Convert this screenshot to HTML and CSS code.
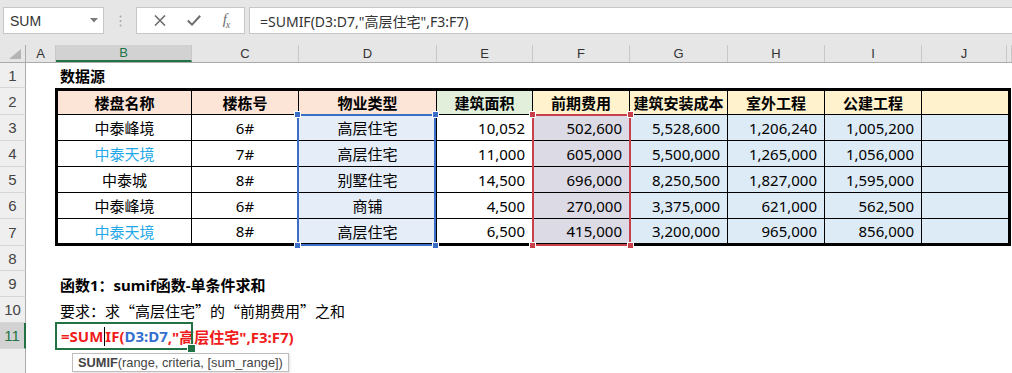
FILE: index.html
```html
<!DOCTYPE html>
<html lang="zh-CN">
<head>
    <meta charset="UTF-8">
    <title>SUMIF</title>
<link rel="stylesheet" href="styles.css">
</head>
<body>
    <!-- formula bar -->
    <div class="toolbar">
        <div class="namebox">
            <span>SUM</span>
            <svg width="8" height="5" viewBox="0 0 8 5"><polygon points="0,0 8,0 4,4.5" fill="#7a7a7a"/></svg>
        </div>
        <div class="grip">
            <svg width="3" height="12" viewBox="0 0 3 12"><circle cx="1.5" cy="1.5" r="1" fill="#a6a6a6"/><circle cx="1.5" cy="6" r="1" fill="#a6a6a6"/><circle cx="1.5" cy="10.5" r="1" fill="#a6a6a6"/></svg>
        </div>
        <div class="fxbtns">
            <svg width="12" height="11" viewBox="0 0 12 11"><path d="M1 0.5 L11 10.5 M11 0.5 L1 10.5" stroke="#6e6e6e" stroke-width="1.6"/></svg>
            <svg width="14" height="11" viewBox="0 0 14 11"><path d="M0.8 5.5 L5 9.6 L13.2 0.8" stroke="#6e6e6e" stroke-width="2" fill="none"/></svg>
            <span class="fx">f<sub>x</sub></span>
        </div>
        <div class="formula">=SUMIF(D3:D7,"高层住宅",F3:F7)</div>
    </div>

    <div class="sheet">
        <div class="colhead">
            <div class="corner"><svg width="12" height="10" viewBox="0 0 12 10"><polygon points="12,0 12,10 0,10" fill="#b4b4b4"/></svg></div>
            <div>A</div>
            <div class="sel">B</div>
            <div>C</div>
            <div>D</div>
            <div>E</div>
            <div>F</div>
            <div>G</div>
            <div>H</div>
            <div>I</div>
            <div>J</div>
            <div></div>
        </div>

        <div class="r r1">
            <div class="rh">1</div><div></div>
            <div class="c txt bold wide">数据源</div>
        </div>

        <div class="r r2">
            <div class="rh">2</div><div></div>
            <div class="t b pe hd">楼盘名称</div>
            <div class="t pe hd">楼栋号</div>
            <div class="t pe hd">物业类型</div>
            <div class="t gr hd">建筑面积</div>
            <div class="t ye hd">前期费用</div>
            <div class="t ye hd">建筑安装成本</div>
            <div class="t ye hd">室外工程</div>
            <div class="t ye hd">公建工程</div>
            <div class="t j ye hd"></div>
        </div>

        <div class="r">
            <div class="rh">3</div><div></div>
            <div class="t b">中泰峰境</div>
            <div class="t">6#</div>
            <div class="t dd">高层住宅
                <div class="range blue"><i class="h tl"></i><i class="h tr"></i><i class="h bl"></i><i class="h br"></i></div>
            </div>
            <div class="t n">10,052</div>
            <div class="t n ff">502,600
                <div class="range red"><i class="h tl"></i><i class="h tr"></i><i class="h bl"></i><i class="h br"></i></div>
            </div>
            <div class="t n bl">5,528,600</div>
            <div class="t n bl">1,206,240</div>
            <div class="t n bl">1,005,200</div>
            <div class="t j bl"></div>
        </div>

        <div class="r">
            <div class="rh">4</div><div></div>
            <div class="t b sky">中泰天境</div>
            <div class="t">7#</div>
            <div class="t dd">高层住宅</div>
            <div class="t n">11,000</div>
            <div class="t n ff">605,000</div>
            <div class="t n bl">5,500,000</div>
            <div class="t n bl">1,265,000</div>
            <div class="t n bl">1,056,000</div>
            <div class="t j bl"></div>
        </div>

        <div class="r">
            <div class="rh">5</div><div></div>
            <div class="t b">中泰城</div>
            <div class="t">8#</div>
            <div class="t dd">别墅住宅</div>
            <div class="t n">14,500</div>
            <div class="t n ff">696,000</div>
            <div class="t n bl">8,250,500</div>
            <div class="t n bl">1,827,000</div>
            <div class="t n bl">1,595,000</div>
            <div class="t j bl"></div>
        </div>

        <div class="r">
            <div class="rh">6</div><div></div>
            <div class="t b">中泰峰境</div>
            <div class="t">6#</div>
            <div class="t dd">商铺</div>
            <div class="t n">4,500</div>
            <div class="t n ff">270,000</div>
            <div class="t n bl">3,375,000</div>
            <div class="t n bl">621,000</div>
            <div class="t n bl">562,500</div>
            <div class="t j bl"></div>
        </div>

        <div class="r r7">
            <div class="rh">7</div><div></div>
            <div class="t b sky">中泰天境</div>
            <div class="t">8#</div>
            <div class="t dd">高层住宅</div>
            <div class="t n">6,500</div>
            <div class="t n ff">415,000</div>
            <div class="t n bl">3,200,000</div>
            <div class="t n bl">965,000</div>
            <div class="t n bl">856,000</div>
            <div class="t j bl"></div>
        </div>

        <div class="r r8">
            <div class="rh">8</div>
        </div>

        <div class="r">
            <div class="rh">9</div><div></div>
            <div class="c txt bold wide">函数1：sumif函数-单条件求和</div>
        </div>

        <div class="r">
            <div class="rh">10</div><div></div>
            <div class="c txt cjk wide">要求：求“高层住宅”的“前期费用”之和</div>
        </div>

        <div class="r">
            <div class="rh active">11</div><div></div>
            <div class="c txt editing"><span class="red-t">=SUM<span class="caret"></span>IF(</span><span class="blue-t">D3:D7</span><span class="red-t">,"高层住宅",F3:F7)</span>
                <div class="tip"><b>SUMIF</b>(range, criteria, [sum_range])</div>
            </div>
        </div>

        <div class="r">
            <div class="rh"></div>
        </div>
    </div>
</body>
</html>
```

FILE: styles.css
```css
*{
    margin: 0;
    padding: 0;
    box-sizing: border-box;
}
body{
    background-color: #fff;
    font-family: "Noto Sans", "Noto Sans CJK SC", sans-serif;
    width: 1012px;
    height: 373px;
    overflow: hidden;
}

/* formula bar */
.toolbar{
    height: 45px;
    background-color: #e6e6e6;
    display: flex;
    align-items: flex-start;
    padding-top: 7px;
}
.namebox{
    margin-left: 3px;
    width: 101px;
    height: 27px;
    background-color: #fff;
    border: 1px solid #c6c6c6;
    display: flex;
    align-items: center;
    justify-content: space-between;
    padding: 0 5px 0 6px;
    font: 14px "Liberation Sans", sans-serif;
    color: #333;
}
.grip{
    width: 32px;
    height: 27px;
    display: flex;
    align-items: center;
    justify-content: center;
}
.fxbtns{
    width: 109px;
    height: 27px;
    background-color: #fff;
    border: 1px solid #c6c6c6;
    display: flex;
    align-items: center;
    justify-content: space-around;
    padding: 0 4px 0 6px;
}
.fx{
    font: italic 15px "Liberation Serif", serif;
    color: #6e6e6e;
    letter-spacing: -1px;
}
.fx sub{
    font-size: 10px;
}
.formula{
    flex: 1;
    margin-left: 4px;
    height: 27px;
    background-color: #fff;
    border: 1px solid #c6c6c6;
    border-right: none;
    padding-left: 10px;
    display: flex;
    align-items: center;
    font-size: 14px;
    color: #333;
}

/* sheet */
.colhead{
    display: grid;
    grid-template-columns: 26px 30px 136px 107px 138px 96px 97px 98px 97px 97px 85px 1fr;
    height: 18px;
    background-color: #e6e6e6;
    border-bottom: 1px solid #ababab;
}
.colhead div{
    display: flex;
    align-items: center;
    justify-content: center;
    border-right: 1px solid #c8c8c8;
    font: 13px "Liberation Sans", sans-serif;
    color: #333;
}
.colhead .corner{
    justify-content: flex-end;
    align-items: flex-end;
    padding: 0 4px 3px 0;
    border-right: 1px solid #ababab;
}
.colhead .sel{
    background-color: #d2d2d2;
    color: #217346;
    border-bottom: 2px solid #217346;
}

.r{
    display: grid;
    grid-template-columns: 26px 29px 137px 107px 138px 96px 97px 98px 97px 97px 89px 1fr;
    height: 26px;
}
.r1, .r8{
    height: 25px;
}
.r2, .r7{
    height: 27px;
}
.rh{
    background-color: #efefef;
    border-right: 1px solid #ababab;
    border-bottom: 1px solid #d6d6d6;
    display: flex;
    align-items: center;
    justify-content: center;
    font: 15px "Liberation Sans", sans-serif;
    color: #444;
}
.rh.active{
    background-color: #d2d2d2;
    color: #217346;
    border-right: 2px solid #217346;
}

.c{
    font-size: 15px;
    display: flex;
    align-items: center;
    white-space: nowrap;
    color: #000;
}
.txt{
    padding-left: 5px;
}
.wide{
    grid-column: 3 / -1;
}
.bold{
    font-weight: bold;
}
.cjk{
    font-family: "Noto Sans CJK SC", sans-serif;
}

/* data table */
.t{
    position: relative;
    font-size: 15px;
    display: flex;
    align-items: center;
    justify-content: center;
    white-space: nowrap;
    border-right: 1px solid #000;
    border-bottom: 1px solid #000;
}
.r2 .t{
    border-top: 3px solid #000;
}
.r7 .t{
    border-bottom: 3px solid #000;
}
.t.b{
    border-left: 3px solid #000;
}
.t.j{
    border-right: 3px solid #000;
}
.t.n{
    justify-content: flex-end;
    padding-right: 7px;
}
.hd{
    font-weight: bold;
}
.pe{ background-color: #fce4d6; }
.gr{ background-color: #e2efda; }
.ye{ background-color: #fff2cc; }
.bl{ background-color: #ddebf7; }
.dd{ background-color: #e5edf8; }
.ff{ background-color: #dcdae5; }
.sky{ color: #1fa9e8; }

/* reference ranges */
.range{
    position: absolute;
    left: -2px;
    right: 0;
    top: -1px;
    height: 132px;
    border: 2px solid;
    z-index: 2;
}
.range.blue{ border-color: #3b6fc6; }
.range.red{
    border-color: #c8404a;
    left: -1px;
    right: -2px;
}
.range .h{
    position: absolute;
    width: 7px;
    height: 7px;
    border: 1px solid #fff;
}
.range.blue .h{ background-color: #3b6fc6; }
.range.red .h{ background-color: #c8404a; }
.h.tl{ left: -5px; top: -5px; }
.h.tr{ right: -5px; top: -5px; }
.h.bl{ left: -5px; bottom: -5px; }
.h.br{ right: -5px; bottom: -5px; }

/* active cell */
.editing{
    position: relative;
    font-weight: bold;
    font-size: 15px;
    padding-left: 6px;
    overflow: visible;
}
.editing::before{
    content: "";
    position: absolute;
    left: 0;
    right: -1px;
    top: -1px;
    bottom: -1px;
    border: 2px solid #217346;
}
.editing::after{
    content: "";
    position: absolute;
    right: -4px;
    bottom: -4px;
    width: 7px;
    height: 7px;
    background-color: #217346;
    border: 1px solid #fff;
}
.red-t{ color: #f01b1b; }
.blue-t{ color: #3470d0; }
.caret{
    display: inline-block;
    width: 1px;
    height: 19px;
    background-color: #000;
    vertical-align: -4px;
    margin: 0 0 0 1px;
}
.tip{
    position: absolute;
    left: 17px;
    top: calc(100% + 4px);
    height: 19px;
    padding: 0 5px 0 5px;
    background-color: #fff;
    border: 1px solid #bdbdbd;
    box-shadow: 1px 1px 2px rgba(0,0,0,0.12);
    display: flex;
    align-items: center;
    font: 12.8px "Liberation Sans", sans-serif;
    font-weight: normal;
    color: #444;
    z-index: 3;
    white-space: nowrap;
}
.tip b{
    font-weight: bold;
}
```
